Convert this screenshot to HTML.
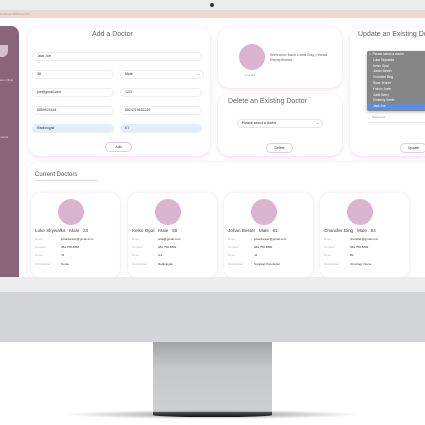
<!DOCTYPE html>
<html><head><style>
*{margin:0;padding:0;box-sizing:border-box}
body{width:425px;height:425px;overflow:hidden;background:#fff;position:relative;font-family:"Liberation Sans",sans-serif;color:#333}
.a{position:absolute}
.card{position:absolute;background:#fff;border-radius:12px;box-shadow:0 1px 4px rgba(220,170,210,.45)}
.inp{position:absolute;height:9px;border:1px solid #eee;border-radius:5px;font-size:3.5px;padding-left:4px;line-height:7px;background:#fff}
.blue{background:#e4eefb;border-color:#e4eefb}
.btn{position:absolute;height:10px;border:1px solid #ecc8dc;border-radius:6px;font-size:3.5px;text-align:center;line-height:8px;background:#fff}
.t{position:absolute;font-size:7px;color:#666;white-space:nowrap}
.dc{position:absolute;top:193px;width:89px;height:85px;background:#fff;border-radius:10px;box-shadow:0 0 3px rgba(225,200,220,.6)}
.dc .c{position:absolute;left:27px;top:6px;width:26px;height:26px;border-radius:50%;background:#d8b4d0}
.dc .n{position:absolute;left:4px;top:35px;font-size:4.6px;color:#444;white-space:nowrap}
.dc .l{position:absolute;left:4px;font-size:3px;color:#c9a6be}
.dc .v{position:absolute;left:30px;font-size:3px;color:#333}
.dd div{height:5.8px;font-size:3.2px;line-height:5.8px;padding-left:6px;color:#fff;white-space:nowrap}
</style></head><body>
<div class="a" style="left:0;top:0;width:425px;height:10px;background:#ececec"></div>
<div class="a" style="left:210px;top:3px;width:4px;height:4px;border-radius:50%;background:#333"></div>
<div class="a" style="left:0;top:10px;width:425px;height:8px;background:#ead9d4;font-size:3px;color:#a99;line-height:8px;padding-left:0">localhost:3000/doctors</div>
<div class="a" style="left:0;top:18px;width:425px;height:260px;background:#fff"></div>
<div class="a" style="left:0;top:26px;width:19px;height:252px;background:#8a6479;border-radius:0 8px 0 0"></div>
<div class="a" style="left:0;top:45px;width:8px;height:12px;background:#d6c0cd;border-radius:0 0 6px 0"></div>
<div class="a" style="left:0;top:78px;font-size:3px;color:#e8d6e0">ace Clinic</div>
<div class="a" style="left:0;top:135px;font-size:3px;color:#e8d6e0">ments</div>

<div class="card" style="left:28px;top:27px;width:182px;height:129px"></div>
<div class="t" style="left:92px;top:31px">Add a Doctor</div>
<div class="inp" style="left:32px;top:52px;width:170px">Jack Joe</div>
<div class="inp" style="left:32px;top:70px;width:82px">38</div>
<div class="inp" style="left:120px;top:70px;width:84px">Male<span style="float:right;padding-right:3px">⌄</span></div>
<div class="inp" style="left:32px;top:88px;width:82px">joe@gmail.com</div>
<div class="inp" style="left:120px;top:88px;width:82px">12/3</div>
<div class="inp" style="left:32px;top:106px;width:82px">0859924444</div>
<div class="inp" style="left:120px;top:106px;width:82px">0824719632220</div>
<div class="inp blue" style="left:32px;top:124px;width:82px">Radiologist</div>
<div class="inp blue" style="left:120px;top:124px;width:82px">E7</div>
<div class="btn" style="left:105px;top:142px;width:27px">Add</div>

<div class="card" style="left:218px;top:27px;width:124px;height:61px"></div>
<div class="a" style="left:239px;top:44px;width:26px;height:26px;border-radius:50%;background:#d8b4d0"></div>
<div class="a" style="left:245px;top:73px;font-size:3px;color:#888">Log out</div>
<div class="a" style="left:270px;top:52px;font-size:4px;color:#666;line-height:5px">Welcome back Lana Ray | Head<br>Receptionist</div>

<div class="card" style="left:218px;top:94px;width:124px;height:62px"></div>
<div class="t" style="left:228px;top:98px">Delete an Existing Doctor</div>
<div class="inp" style="left:237px;top:119px;width:86px;border-color:#e6e6e6">Please select a doctor<span style="float:right;padding-right:3px">⌄</span></div>
<div class="btn" style="left:266px;top:143px;width:27px">Delete</div>

<div class="card" style="left:350px;top:27px;width:90px;height:129px"></div>
<div class="t" style="left:358px;top:31px">Update an Existing Doctor</div>
<div class="a" style="left:368px;top:115px;width:60px;height:8px;border-bottom:1px solid #eee;font-size:3px;color:#999;padding-left:4px">Password</div>
<div class="btn" style="left:400px;top:143px;width:27px">Update</div>
<div class="a dd" style="left:367px;top:51px;width:60px;height:60px;background:#868686;border-radius:2px;box-shadow:0 1px 3px rgba(0,0,0,.3);padding-top:1px">
<div style="padding-left:2px">✓ Please select a doctor</div><div>Luke Skywalks</div><div>Kelso Opal</div><div>Johan Bester</div><div>Chandler Bing</div><div>Rose Jenner</div><div>Falcon Joele</div><div>Juliet Berry</div><div>Kimberly Smith</div><div style="background:#5b8fe0">Jack Joe</div></div>

<div class="card" style="left:28px;top:162px;width:420px;height:120px;box-shadow:0 0 3px rgba(225,200,220,.5);border-radius:12px"></div>
<div class="a" style="left:35px;top:172px;font-size:6px;color:#555">Current Doctors</div>
<div class="a" style="left:35px;top:180px;width:63px;height:1px;background:#ecd6e4"></div>

<div class="dc" style="left:31px"><div class="c"></div><div class="n">Luke Skywalks &nbsp; Male &nbsp; 23</div>
<div class="l" style="top:44px">Email</div><div class="v" style="top:44px">johanbester@gmail.com</div>
<div class="l" style="top:52px">Number</div><div class="v" style="top:52px">082 758 8882</div>
<div class="l" style="top:60px">Room</div><div class="v" style="top:60px">J4</div>
<div class="l" style="top:69px">Occupation</div><div class="v" style="top:69px">Nurse</div></div>
<div class="dc" style="left:128px"><div class="c"></div><div class="n">Kelso Opal &nbsp; Male &nbsp; 58</div>
<div class="l" style="top:44px">Email</div><div class="v" style="top:44px">opal@gmail.com</div>
<div class="l" style="top:52px">Number</div><div class="v" style="top:52px">082 758 8882</div>
<div class="l" style="top:60px">Room</div><div class="v" style="top:60px">G4</div>
<div class="l" style="top:69px">Occupation</div><div class="v" style="top:69px">Radiologist</div></div>
<div class="dc" style="left:224px"><div class="c"></div><div class="n">Johan Bester &nbsp; Male &nbsp; 61</div>
<div class="l" style="top:44px">Email</div><div class="v" style="top:44px">johanbester@gmail.com</div>
<div class="l" style="top:52px">Number</div><div class="v" style="top:52px">082 758 8882</div>
<div class="l" style="top:60px">Room</div><div class="v" style="top:60px">J4</div>
<div class="l" style="top:69px">Occupation</div><div class="v" style="top:69px">Surgical Oncologist</div></div>
<div class="dc" style="left:320px"><div class="c"></div><div class="n">Chandler Bing &nbsp; Male &nbsp; 54</div>
<div class="l" style="top:44px">Email</div><div class="v" style="top:44px">chandler@gmail.com</div>
<div class="l" style="top:52px">Number</div><div class="v" style="top:52px">082 758 8882</div>
<div class="l" style="top:60px">Room</div><div class="v" style="top:60px">B2</div>
<div class="l" style="top:69px">Occupation</div><div class="v" style="top:69px">Oncology Nurse</div></div>

<div class="a" style="left:0;top:277px;width:425px;height:15px;background:#ececee"></div>
<div class="a" style="left:0;top:292px;width:425px;height:50px;background:#d4d5d8"></div>
<div class="a" style="left:153px;top:342px;width:119px;height:71px;background:linear-gradient(#a3a4a6,#c6c7c9 35%,#cfd0d2)"></div>
<div class="a" style="left:65px;top:410px;width:295px;height:9px;border-radius:50%;background:radial-gradient(ellipse at center,rgba(0,0,0,.45),rgba(0,0,0,.1) 55%,rgba(0,0,0,0) 72%)"></div>
<div class="a" style="left:153px;top:412px;width:119px;height:5px;background:linear-gradient(#555,#111);border-radius:0 0 40% 40%"></div>
</body></html>
